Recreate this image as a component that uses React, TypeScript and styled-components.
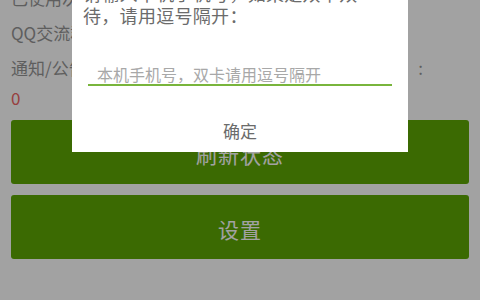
import styled, { createGlobalStyle } from 'styled-components';

const GlobalStyle = createGlobalStyle`
	html, body {
		margin: 0;
		padding: 0;
		background: #ffffff;
	}
	body {
		font-family: 'Noto Sans CJK SC', 'Noto Sans', sans-serif;
	}
`;

const Screen = styled.div`
	position: relative;
	width: 480px;
	height: 300px;
	overflow: hidden;
	background: #ffffff;
`;

const Content = styled.div`
	display: flex;
	flex-direction: column;
	margin-top: -12px;
	padding: 0 11px;
`;

const InfoRow = styled.div<{ $gap?: number; $red?: boolean }>`
	display: flex;
	justify-content: space-between;
	align-items: center;
	height: 20px;
	margin-bottom: ${(p) => p.$gap ?? 15}px;
	font-size: 17px;
	line-height: 20px;
	color: ${(p) => (p.$red ? '#ee6464' : '#959595')};
	white-space: nowrap;
`;

const Colon = styled.span`
	margin-right: 46px;
`;

const GreenButton = styled.button`
	display: flex;
	align-items: center;
	justify-content: center;
	height: 64px;
	margin: 0 0 11px;
	padding: 3px 0 0;
	border: none;
	border-radius: 3px;
	background: #5da804;
	color: #ffffff;
	font-family: 'Noto Sans CJK SC', 'Noto Sans', sans-serif;
	font-size: 21px;
	letter-spacing: 1px;
`;

const Dim = styled.div`
	position: absolute;
	inset: 0;
	background: rgba(0, 0, 0, 0.365);
`;

const Dialog = styled.div`
	position: absolute;
	left: 72px;
	top: -38px;
	width: 336px;
	display: flex;
	flex-direction: column;
	background: #ffffff;
	padding-top: 20px;
	box-sizing: border-box;
`;

const Message = styled.p`
	margin: 0 0 0 11px;
	width: 285px;
	font-size: 18px;
	line-height: 22px;
	letter-spacing: 0.3px;
	color: #6b6b6b;
`;

const PhoneInput = styled.input`
	margin: 32px 16px 0;
	height: 28px;
	padding: 6px 9px 0;
	box-sizing: border-box;
	border: none;
	border-bottom: 2px solid #79b53c;
	outline: none;
	font-family: 'Noto Sans CJK SC', 'Noto Sans', sans-serif;
	font-size: 16px;
	line-height: 20px;
	color: #333;
	background: transparent;

	&::placeholder {
		color: #a8a8a8;
	}
`;

const OkButton = styled.button`
	margin-top: 22px;
	height: 44px;
	border: none;
	background: transparent;
	font-family: 'Noto Sans CJK SC', 'Noto Sans', sans-serif;
	font-size: 17px;
	color: #6b6b6b;
`;

export default function App() {
	return (
		<>
			<GlobalStyle />
			<Screen>
				<Content>
					<InfoRow>已使用次数：12</InfoRow>
					<InfoRow>QQ交流群：123456789</InfoRow>
					<InfoRow $gap={10}>
						<span>通知/公告</span>
						<Colon>:</Colon>
					</InfoRow>
					<InfoRow $red $gap={12}>
						0
					</InfoRow>
					<GreenButton>刷新状态</GreenButton>
					<GreenButton>设置</GreenButton>
				</Content>
				<Dim />
				<Dialog>
					<Message>请输入本机手机号，如果是双卡双待，请用逗号隔开：</Message>
					<PhoneInput placeholder='本机手机号，双卡请用逗号隔开' />
					<OkButton>确定</OkButton>
				</Dialog>
			</Screen>
		</>
	);
}
